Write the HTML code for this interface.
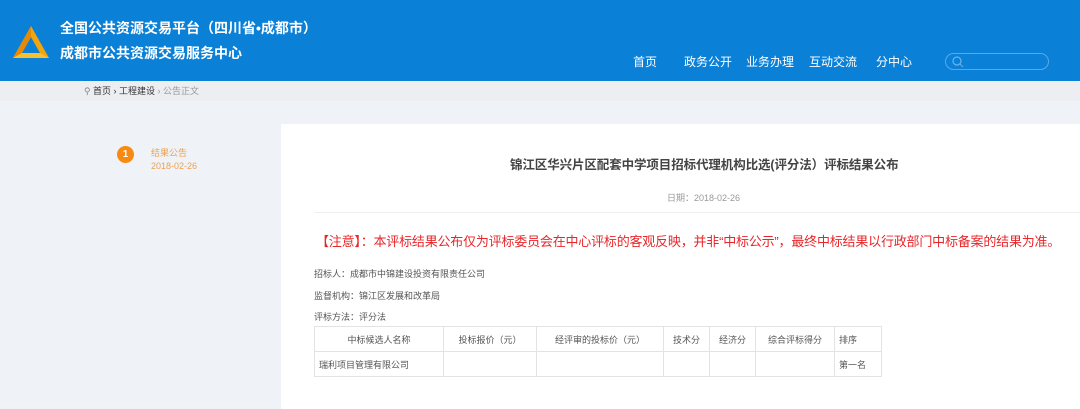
<!DOCTYPE html>
<html><head><meta charset="utf-8"><style>
*{margin:0;padding:0;box-sizing:border-box}
body{width:1080px;height:409px;overflow:hidden;background:#eff2f6;font-family:"Liberation Sans","Noto Sans CJK SC",sans-serif;position:relative}
.hd{position:absolute;left:0;top:0;width:1080px;height:81px;background:#0a80d7}
.t1,.t2{position:absolute;left:60px;color:#fff;font-weight:bold;font-size:14px;white-space:nowrap}
.t1{top:18px}.t2{top:43px}
.nav{position:absolute;top:53px;color:#fff;font-size:12px;white-space:nowrap}
.search{position:absolute;left:945px;top:53px;width:104px;height:17px;border:1px solid #5aa8ea;border-radius:9px}
.bc{position:absolute;left:0;top:81px;width:1080px;height:20px;background:#eceef1;font-size:9px;color:#333;line-height:20px}
.panel{position:absolute;left:281px;top:124px;width:799px;height:285px;background:#fff}
.a{position:absolute;white-space:nowrap}
table{position:absolute;left:314px;top:326px;border-collapse:collapse;font-size:9px;color:#555}
td{border:1px solid #e3e3e3;height:25px;text-align:center}
</style></head><body>
<div class="hd">
<svg style="position:absolute;left:12px;top:25px" width="38" height="36" viewBox="0 0 38 36">
<polygon points="19,1 37,33 1,33" fill="#f2a50c"/>
<polygon points="19,12 28,28 10,28" fill="#0a80d7"/>
<polygon points="19,1 1,33 10,28 19,12" fill="#e48a08"/>
<polygon points="1,33 37,33 28,28 10,28" fill="#f7c030"/>
</svg>
<div class="t1">全国公共资源交易平台（四川省•成都市）</div>
<div class="t2">成都市公共资源交易服务中心</div>
<div class="nav" style="left:633px">首页</div>
<div class="nav" style="left:684px">政务公开</div>
<div class="nav" style="left:746px">业务办理</div>
<div class="nav" style="left:809px">互动交流</div>
<div class="nav" style="left:876px">分中心</div>
<div class="search"><svg style="position:absolute;left:6px;top:2px" width="12" height="12"><circle cx="5" cy="5" r="4" fill="none" stroke="#6db3ec" stroke-width="1.2"/><line x1="8" y1="8" x2="11" y2="11" stroke="#6db3ec"/></svg></div>
</div>
<div class="bc"><span style="position:absolute;left:84px;color:#888">⚲</span><span style="position:absolute;left:93px">首页 › 工程建设 <span style="color:#999">› 公告正文</span></span></div>
<div class="a" style="left:117px;top:146px;width:17px;height:17px;border-radius:50%;background:#f68a12;color:#fff;font-size:10px;font-weight:bold;text-align:center;line-height:17px">1</div>
<div class="a" style="left:151px;top:146px;font-size:9px;color:#f0a050">结果公告</div>
<div class="a" style="left:151px;top:161px;font-size:9px;color:#f0a050">2018-02-26</div>
<div class="panel"></div>
<div class="a" style="left:510px;top:154px;font-size:12.5px;font-weight:bold;color:#444;letter-spacing:-0.1px">锦江区华兴片区配套中学项目招标代理机构比选(评分法）评标结果公布</div>
<div class="a" style="left:667px;top:191px;font-size:9px;color:#999">日期：2018-02-26</div>
<div class="a" style="left:314px;top:212px;width:766px;height:1px;background:#f0f0f0"></div>
<div class="a" style="left:316px;top:231px;font-size:13px;color:#e8262a;letter-spacing:-0.2px">【注意】：本评标结果公布仅为评标委员会在中心评标的客观反映，并非“中标公示”，最终中标结果以行政部门中标备案的结果为准。</div>
<div class="a" style="left:314px;top:267px;font-size:9px;color:#555">招标人：成都市中锦建设投资有限责任公司</div>
<div class="a" style="left:314px;top:289px;font-size:9px;color:#555">监督机构：锦江区发展和改革局</div>
<div class="a" style="left:314px;top:310px;font-size:9px;color:#555">评标方法：评分法</div>
<table>
<tr><td style="width:129px">中标候选人名称</td><td style="width:93px">投标报价（元）</td><td style="width:127px">经评审的投标价（元）</td><td style="width:46px">技术分</td><td style="width:46px">经济分</td><td style="width:79px">综合评标得分</td><td style="width:47px;text-align:left;padding-left:4px">排序</td></tr>
<tr><td style="text-align:left;padding-left:4px">瑞利项目管理有限公司</td><td></td><td></td><td></td><td></td><td></td><td style="text-align:left;padding-left:4px">第一名</td></tr>
</table>
</body></html>
